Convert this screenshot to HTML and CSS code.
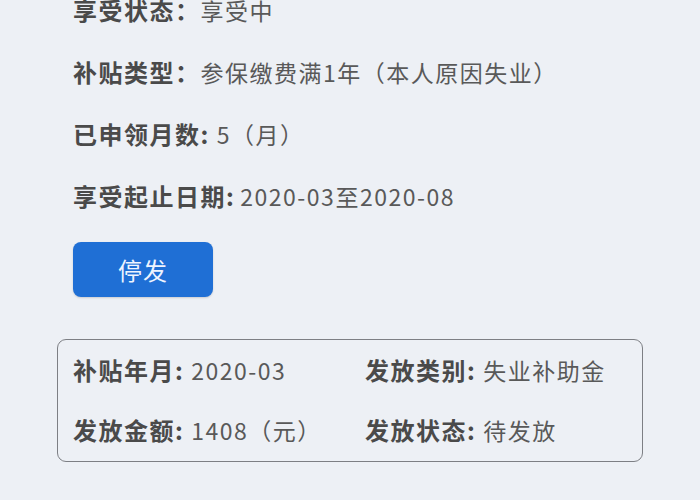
FILE: index.html
```html
<!DOCTYPE html>
<html lang="zh-CN">
<head>
<meta charset="utf-8">
<link rel="stylesheet" href="styles.css">
</head>
<body>
<div class="page">
  <div class="info">
    <div class="row"><span class="label">享受状态：</span><span class="value">享受中</span></div>
    <div class="row"><span class="label">补贴类型：</span><span class="value">参保缴费满1年（本人原因失业）</span></div>
    <div class="row"><span class="label">已申领月数:</span><span class="value gap">5（月）</span></div>
    <div class="row"><span class="label">享受起止日期:</span><span class="value gap-s">2020-03至2020-08</span></div>
  </div>
  <button class="btn">停发</button>
  <div class="card">
    <div class="row"><span class="label">补贴年月:</span><span class="value gap">2020-03</span></div>
    <div class="row"><span class="label">发放类别:</span><span class="value gap">失业补助金</span></div>
    <div class="row"><span class="label">发放金额:</span><span class="value gap">1408（元）</span></div>
    <div class="row"><span class="label">发放状态:</span><span class="value gap">待发放</span></div>
  </div>
</div>
</body>
</html>
```

FILE: styles.css
```css
html, body {
  margin: 0;
  padding: 0;
  background: #edf0f5;
  overflow: hidden;
}
body {
  font-family: "Noto Sans CJK SC", "Noto Sans", sans-serif;
  color: #5a5a5a;
}
.page {
  width: 700px;
  height: 500px;
}
.info {
  margin-top: -21px;
  padding-left: 73px;
}
.row {
  height: 62px;
  line-height: 62px;
  white-space: nowrap;
}
.label {
  font-size: 24px;
  font-weight: 700;
  letter-spacing: 1.5px;
  color: #4a4a4a;
}
.value {
  font-size: 23px;
  letter-spacing: 1.5px;
  color: #595959;
}
.value.gap {
  margin-left: 7px;
}
.value.gap-s {
  margin-left: 5px;
}
.btn {
  display: block;
  margin: 15px 0 0 73px;
  width: 140px;
  height: 55px;
  border: none;
  border-radius: 8px;
  background: #1f6fd5;
  color: #eef4ff;
  font-family: "Noto Sans CJK SC", sans-serif;
  font-size: 24px;
  letter-spacing: 1px;
  box-shadow: 0 1px 2px rgba(0,0,0,0.15);
}
.card {
  margin: 42px 0 0 57px;
  width: 586px;
  box-sizing: border-box;
  border: 1.5px solid #7d7f84;
  border-radius: 9px;
  padding: 0 0 1px 15px;
  display: grid;
  grid-template-columns: 292px 1fr;
}
.card .row {
  height: 60px;
  line-height: 60px;
}
```
